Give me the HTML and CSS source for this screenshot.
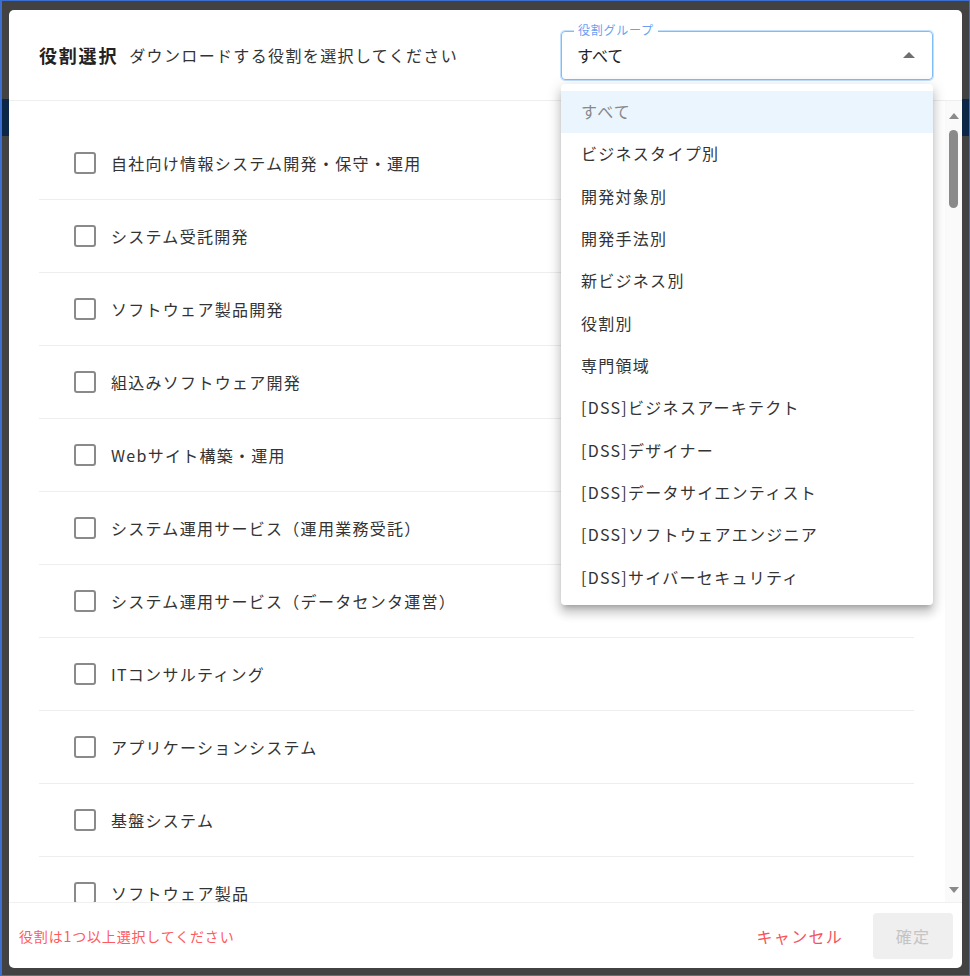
FILE: index.html
```html
<!DOCTYPE html>
<html lang="ja">
<head>
<meta charset="utf-8">
<title>役割選択</title>
<link rel="stylesheet" href="styles.css">
</head>
<body>
<div class="dialog">
  <header class="dlg-header">
    <h1 class="dlg-title">役割選択</h1>
    <p class="dlg-sub">ダウンロードする役割を選択してください</p>
    <div class="select">
      <div class="field">
        <span class="field-label">役割グループ</span>
        <span class="field-value">すべて</span>
        <span class="arrow-up"></span>
      </div>
      <ul class="menu">
        <li class="menu-item active">すべて</li>
        <li class="menu-item">ビジネスタイプ別</li>
        <li class="menu-item">開発対象別</li>
        <li class="menu-item">開発手法別</li>
        <li class="menu-item">新ビジネス別</li>
        <li class="menu-item">役割別</li>
        <li class="menu-item">専門領域</li>
        <li class="menu-item">[DSS]ビジネスアーキテクト</li>
        <li class="menu-item">[DSS]デザイナー</li>
        <li class="menu-item">[DSS]データサイエンティスト</li>
        <li class="menu-item">[DSS]ソフトウェアエンジニア</li>
        <li class="menu-item">[DSS]サイバーセキュリティ</li>
      </ul>
    </div>
  </header>
  <div class="dlg-body">
    <ul class="role-list">
      <li class="role"><span class="cb"></span><span class="role-name">自社向け情報システム開発・保守・運用</span></li>
      <li class="role"><span class="cb"></span><span class="role-name">システム受託開発</span></li>
      <li class="role"><span class="cb"></span><span class="role-name">ソフトウェア製品開発</span></li>
      <li class="role"><span class="cb"></span><span class="role-name">組込みソフトウェア開発</span></li>
      <li class="role"><span class="cb"></span><span class="role-name">Webサイト構築・運用</span></li>
      <li class="role"><span class="cb"></span><span class="role-name">システム運用サービス（運用業務受託）</span></li>
      <li class="role"><span class="cb"></span><span class="role-name">システム運用サービス（データセンタ運営）</span></li>
      <li class="role"><span class="cb"></span><span class="role-name">ITコンサルティング</span></li>
      <li class="role"><span class="cb"></span><span class="role-name">アプリケーションシステム</span></li>
      <li class="role"><span class="cb"></span><span class="role-name">基盤システム</span></li>
      <li class="role"><span class="cb"></span><span class="role-name">ソフトウェア製品</span></li>
    </ul>
    <div class="scrollbar">
      <span class="sb-up"></span>
      <span class="sb-thumb"></span>
      <span class="sb-space"></span>
      <span class="sb-down"></span>
    </div>
  </div>
  <footer class="dlg-footer">
    <p class="error">役割は1つ以上選択してください</p>
    <button class="btn-cancel">キャンセル</button>
    <button class="btn-ok" disabled>確定</button>
  </footer>
</div>
</body>
</html>
```
FILE: styles.css
```css
* { box-sizing: border-box; }
html, body { margin: 0; padding: 0; }
html { width: 970px; height: 976px; }
body {
  width: 970px;
  height: 976px;
  border-top: 1px solid #3d6fd0;
  border-left: 2px solid #3d6fd0;
  border-right: 1px solid #3d6fd0;
  border-bottom: 1px solid #3d6fd0;
  padding: 9px 7px 7px 7px;
  background:
    linear-gradient(to bottom, #424242 0, #424242 99px, #0c2647 99px, #0c2647 136px, #424242 136px);
  font-family: "Noto Sans CJK JP", "Noto Sans", sans-serif;
  color: #333;
  letter-spacing: 0.08em;
  overflow: hidden;
}
.dialog {
  width: 953px;
  height: 958px;
  background: #fff;
  border-radius: 5px;
  display: flex;
  flex-direction: column;
  overflow: hidden;
}
.dlg-header {
  height: 91px;
  flex: none;
  display: flex;
  align-items: center;
  padding: 0 29px 0 30px;
  border-bottom: 1px solid #eeeeee;
}
.dlg-title {
  margin: 0;
  font-size: 18px;
  font-weight: 700;
  color: #222;
  letter-spacing: 0.1em;
}
.dlg-sub {
  margin: 0 0 0 11px;
  font-size: 16px;
  color: #333;
  letter-spacing: 0.085em;
}
.select {
  margin-left: auto;
  width: 372px;
  position: relative;
}
.field {
  height: 49px;
  border: 1px solid #7fbdf7;
  box-shadow: 0 0 0 1px #c2e1fd;
  border-radius: 4px;
  display: flex;
  align-items: center;
  padding: 0 17px 0 15px;
  position: relative;
}
.field-label {
  position: absolute;
  left: 12px;
  top: -10px;
  background: #fff;
  padding: 0 4px;
  font-size: 12px;
  line-height: 16px;
  color: #6a9ff2;
  letter-spacing: 0.06em;
}
.field-value {
  font-size: 16px;
  color: #222;
  letter-spacing: 0;
}
.arrow-up {
  margin-left: auto;
  width: 0;
  height: 0;
  border-left: 6px solid transparent;
  border-right: 6px solid transparent;
  border-bottom: 6px solid #6f6f6f;
}
.menu {
  position: absolute;
  left: 0;
  right: 0;
  top: 53px;
  margin: 0;
  padding: 7px 0;
  list-style: none;
  background: #fff;
  border-radius: 4px;
  box-shadow: 0 5px 5px -3px rgba(0,0,0,.2), 0 8px 10px 1px rgba(0,0,0,.14), 0 3px 14px 2px rgba(0,0,0,.12);
  z-index: 10;
}
.menu-item {
  height: 42.33px;
  display: flex;
  align-items: center;
  padding-left: 20px;
  padding-bottom: 1px;
  font-size: 16px;
  color: #333;
}
.menu-item.active {
  background: #eaf5fe;
  color: #888;
}
.dlg-body {
  flex: 1;
  min-height: 0;
  display: flex;
  overflow: hidden;
}
.role-list {
  flex: 1;
  margin: 0;
  padding: 26px 31px 0 30px;
  list-style: none;
  overflow: hidden;
}
.role {
  height: 73px;
  flex: none;
  display: flex;
  align-items: center;
  padding-left: 35px;
  border-bottom: 1px solid #eeeeee;
}
.cb {
  width: 22px;
  height: 22px;
  border: 2px solid #8a8a8a;
  border-radius: 3px;
  flex: none;
  margin-top: -1px;
}
.role-name {
  margin-left: 15px;
  font-size: 16px;
  color: #333;
}
.scrollbar {
  width: 17px;
  flex: none;
  background: #fafafa;
  display: flex;
  flex-direction: column;
  align-items: center;
  padding: 12px 0 9px;
}
.sb-up {
  width: 0; height: 0;
  border-left: 5px solid transparent;
  border-right: 5px solid transparent;
  border-bottom: 6px solid #8a8a8a;
}
.sb-thumb {
  width: 9px;
  height: 78px;
  margin-top: 11px;
  background: #8a8a8a;
  border-radius: 5px;
}
.sb-space { flex: 1; }
.sb-down {
  width: 0; height: 0;
  border-left: 5px solid transparent;
  border-right: 5px solid transparent;
  border-top: 6px solid #8a8a8a;
}
.dlg-footer {
  height: 66px;
  flex: none;
  display: flex;
  align-items: center;
  padding: 0 9px 0 10px;
  border-top: 1px solid #f0f0f0;
}
.error {
  margin: 0;
  font-size: 14px;
  color: #ff5a60;
  letter-spacing: 0.06em;
}
.btn-cancel {
  margin-left: auto;
  background: none;
  border: 0;
  padding: 0 16px;
  height: 46px;
  font-family: inherit;
  font-size: 16px;
  letter-spacing: 0.08em;
  color: #f5535a;
}
.btn-ok {
  margin-left: 14px;
  width: 80px;
  height: 46px;
  border: 0;
  border-radius: 4px;
  background: #efefef;
  color: #c4c4c4;
  font-family: inherit;
  font-size: 16px;
  letter-spacing: 0.08em;
}
```
